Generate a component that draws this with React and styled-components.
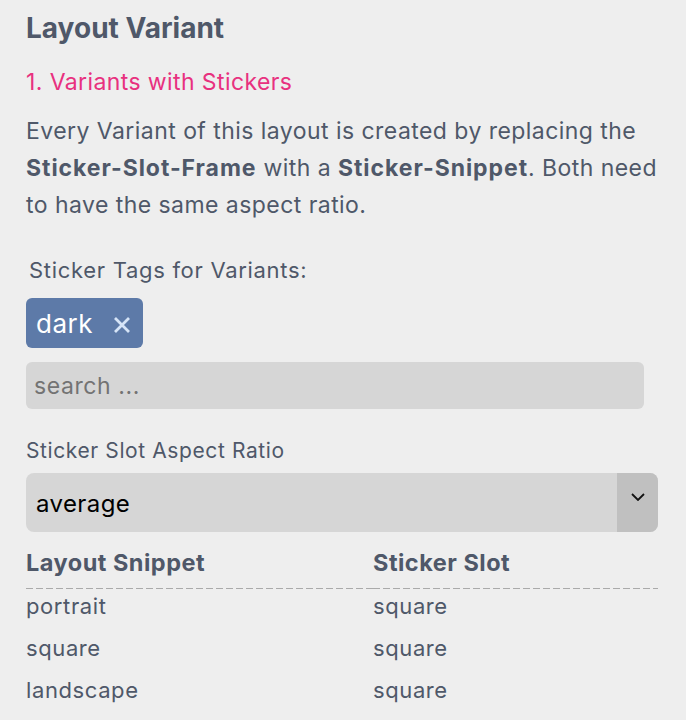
import React from "react";
import styled, { createGlobalStyle } from "styled-components";

const Global = createGlobalStyle`
  html, body { margin: 0; padding: 0; background: #eeeeee; }
  body { font-family: Inter, "Noto Sans", "Liberation Sans", sans-serif; color: #4f5869; }
  * { box-sizing: border-box; }
`;

const Panel = styled.div`
  width: 686px;
  height: 720px;
  overflow: hidden;
  padding: 12px 24px 0 26px;
  display: flex;
  flex-direction: column;
  align-items: flex-start;
`;

const Title = styled.h1`
  margin: 0;
  font-size: 28px;
  line-height: 32px;
  font-weight: 700;
  color: #4f5869;
`;

const Subtitle = styled.h2`
  margin: 23px 0 0;
  font-size: 23px;
  line-height: 30px;
  font-weight: 400;
  letter-spacing: 0.4px;
  color: #e8317f;
`;

const Paragraph = styled.p`
  margin: 16px 0 0;
  font-size: 23px;
  line-height: 37px;
  letter-spacing: 0.45px;
  color: #4f5869;
  b { font-weight: 700; letter-spacing: 0.95px; }
`;

const Label = styled.div`
  margin-top: ${(p) => p.$mt}px;
  padding-left: ${(p) => p.$indent || 0}px;
  font-size: ${(p) => p.$size}px;
  letter-spacing: ${(p) => p.$ls}px;
  line-height: 28px;
  color: #4f5869;
`;

const Tag = styled.div`
  margin-top: 14px;
  height: 50px;
  display: flex;
  align-items: center;
  gap: 20px;
  padding: 0 12px 0 10px;
  background: #5d7aa8;
  border-radius: 6px;
  color: #ffffff;
  font-size: 26px;
  letter-spacing: 0.5px;
`;

const TagClose = styled.span`
  display: flex;
  padding-top: 3px;
`;

const Search = styled.input`
  margin-top: 14px;
  width: 618px;
  height: 47px;
  border: none;
  outline: none;
  border-radius: 6px;
  background: #d6d6d6;
  padding: 0 8px;
  font-family: inherit;
  font-size: 23px;
  letter-spacing: 0.6px;
  color: #333;
  &::placeholder { color: #737373; }
`;

const Select = styled.div`
  margin-top: 8px;
  width: 632px;
  height: 59px;
  border-radius: 8px;
  background: #d6d6d6;
  display: flex;
  overflow: hidden;
`;

const SelectValue = styled.div`
  flex: 1;
  display: flex;
  align-items: center;
  padding-left: 10px;
  padding-top: 2px;
  font-size: 24px;
  letter-spacing: 0.4px;
  color: #000;
`;

const SelectArrow = styled.div`
  width: 41px;
  background: #c0c0c0;
  display: flex;
  justify-content: center;
  padding-top: 20px;
`;

const Table = styled.div`
  margin-top: 16px;
  width: 632px;
  display: grid;
  grid-template-columns: 347px 1fr;
`;

const HeadCell = styled.div`
  font-size: 23.5px;
  font-weight: 700;
  letter-spacing: 0.5px;
  line-height: 30px;
  padding-bottom: 9px;
  color: #4f5869;
  background-image: repeating-linear-gradient(to right, #aaaaaa 0 7px, transparent 7px 10px);
  background-size: 100% 1.5px;
  background-repeat: no-repeat;
  background-position: left bottom;
  height: 41px;
`;

const Cell = styled.div`
  font-size: 22px;
  letter-spacing: 0.6px;
  line-height: 30px;
  padding: 2px 0 10px;
  color: #4f5869;
`;

const rows = [
  ["portrait", "square"],
  ["square", "square"],
  ["landscape", "square"],
];

export default function App() {
  return (
    <>
      <Global />
      <Panel>
        <Title>Layout Variant</Title>
        <Subtitle>1. Variants with Stickers</Subtitle>
        <Paragraph>
          Every Variant of this layout is created by replacing the{" "}
          <b>Sticker-Slot-Frame</b> with a <b>Sticker-Snippet</b>. Both need
          to have the same aspect ratio.
        </Paragraph>
        <Label $mt={32} $indent={3} $size={22} $ls={0.7}>Sticker Tags for Variants:</Label>
        <Tag>
          dark
          <TagClose>
            <svg width="18" height="18" viewBox="0 0 18 18">
              <path d="M2 2 L16 16 M16 2 L2 16" stroke="#d6e4f7" strokeWidth="2.8" strokeLinecap="butt" />
            </svg>
          </TagClose>
        </Tag>
        <Search placeholder="search ..." />
        <Label $mt={28} $size={21} $ls={0.6}>Sticker Slot Aspect Ratio</Label>
        <Select>
          <SelectValue>average</SelectValue>
          <SelectArrow>
            <svg width="14" height="8" viewBox="0 0 14 8">
              <path d="M1 1 L7 7 L13 1" fill="none" stroke="#111" strokeWidth="1.8" />
            </svg>
          </SelectArrow>
        </Select>
        <Table>
          <HeadCell>Layout Snippet</HeadCell>
          <HeadCell>Sticker Slot</HeadCell>
          {rows.map(([a, b], i) => (
            <React.Fragment key={i}>
              <Cell>{a}</Cell>
              <Cell>{b}</Cell>
            </React.Fragment>
          ))}
        </Table>
      </Panel>
    </>
  );
}
